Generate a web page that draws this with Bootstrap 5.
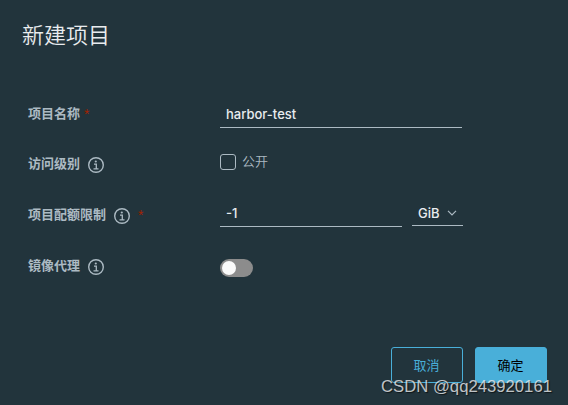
<!DOCTYPE html>
<html lang="zh-CN">
<head>
<meta charset="utf-8">
<meta name="viewport" content="width=device-width, initial-scale=1">
<title>新建项目</title>
<link href="https://cdn.jsdelivr.net/npm/bootstrap@5.3.0/dist/css/bootstrap.min.css" rel="stylesheet">
<style>
html, body { height: 100%; }
body { background: #22343c; color: #acbac3; font: 13px/20px "Inter", "Noto Sans CJK SC", sans-serif; overflow: hidden; }
.dialog { height: 405px; padding: 18px 21px 22px 21px; }
.dialog-title { font: 350 22px/30px "Noto Sans CJK SC", sans-serif; color: #e9ecef; padding-left: 1px; }
.project-form { margin-top: 40px; padding-left: 7px; }
.field { height: 51px; }
.field:first-child { height: 50px; }
.field-label { width: 192px; font-family: "Noto Sans CJK SC", sans-serif; font-weight: 700; padding-top: 15px; height: 40px; }
.req { color: #a32100; font: 400 14px/20px "Liberation Sans", sans-serif; padding-top: 1px; }
.info { width: 16px; height: 16px; margin: 4px 0 0 8px; }
.line-input { border: 0; border-bottom: 1px solid #acbac3; border-radius: 0; background: transparent !important; color: #e9ecef !important; box-shadow: none !important; height: 24px; padding: 0 6px 3px; font: 500 13px/20px "Inter", sans-serif; margin-top: 16px; }
.name-input { width: 242px; }
.quota-input { width: 182px; margin-top: 14px; }
.unit { width: 51px; height: 24px; border-bottom: 1px solid #acbac3; color: #e9ecef; font-weight: 500; margin: 13px 0 0 10px; padding: 0 6px 2px; }
.unit svg { margin-top: 1px; }
.public-check .form-check-input { width: 16px; height: 16px; margin: 16px 6px 0 0; background: transparent; border: 1px solid #acbac3; border-radius: 3px; float: none; }
.public-check label { padding-top: 13px; font-family: "Noto Sans CJK SC", sans-serif; font-weight: 350; }
.proxy-switch { width: 33px; height: 18px; margin-top: 19px; padding: 2px; background: #8c8c8c; }
.proxy-switch span { width: 14px; height: 14px; background: #fafafa; }
.action { width: 72px; height: 36px; padding: 0 1px 0 0; border-radius: 3px; font: 400 13px/34px "Noto Sans CJK SC", sans-serif; border: 1px solid #49afd9; }
.action-cancel { color: #49afd9; }
.action-ok { background: #49afd9; color: #000; }
.watermark { position: absolute; left: 381px; top: 377px; font: 16.7px/20px "Liberation Sans", sans-serif; color: rgba(230,232,234,.82); text-shadow: 1px 1px 1px rgba(0,0,0,.6); white-space: nowrap; }
</style>
</head>
<body>
<svg class="d-none">
<symbol id="info-icon" viewBox="0 0 16 16"><circle cx="8" cy="8" r="7.3" fill="none" stroke="#acbac3" stroke-width="1.4"/><circle cx="7.8" cy="4.5" r="1.1" fill="#acbac3"/><path d="M6 7.1h2.3v4.7M5.5 11.8h5" fill="none" stroke="#acbac3" stroke-width="1.3"/></symbol>
</svg>
<main class="dialog d-flex flex-column position-relative">
<h1 class="dialog-title mb-0">新建项目</h1>
<form class="project-form">
<div class="field d-flex align-items-start"><div class="field-label d-flex"><span>项目名称</span><span class="req ms-1">*</span></div><input class="form-control line-input name-input" value="harbor-test" aria-label="项目名称"></div>
<div class="field d-flex align-items-start"><div class="field-label d-flex"><span>访问级别</span><svg class="info"><use href="#info-icon"/></svg></div><div class="public-check d-flex align-items-start"><input class="form-check-input" type="checkbox" id="public"><label for="public">公开</label></div></div>
<div class="field d-flex align-items-start"><div class="field-label d-flex"><span>项目配额限制</span><svg class="info"><use href="#info-icon"/></svg><span class="req ms-2">*</span></div><input class="form-control line-input quota-input" value="-1" aria-label="项目配额限制"><div class="unit d-flex align-items-center justify-content-between"><span>GiB</span><svg width="10" height="6" viewBox="0 0 10 6"><path d="M1 .8l4 4 4-4" fill="none" stroke="#acbac3" stroke-width="1.2"/></svg></div></div>
<div class="field d-flex align-items-start"><div class="field-label d-flex"><span>镜像代理</span><svg class="info"><use href="#info-icon"/></svg></div><div class="proxy-switch rounded-pill d-flex" role="switch" aria-checked="false"><span class="rounded-circle"></span></div></div>
</form>
<div class="d-flex justify-content-end mt-auto action-row"><button type="button" class="btn action action-cancel me-2">取消</button><button type="button" class="btn action action-ok ms-1">确定</button></div>
<div class="watermark">CSDN @qq243920161</div>
</main>
<script src="https://cdn.jsdelivr.net/npm/bootstrap@5.3.0/dist/js/bootstrap.bundle.min.js"></script>
</body>
</html>
